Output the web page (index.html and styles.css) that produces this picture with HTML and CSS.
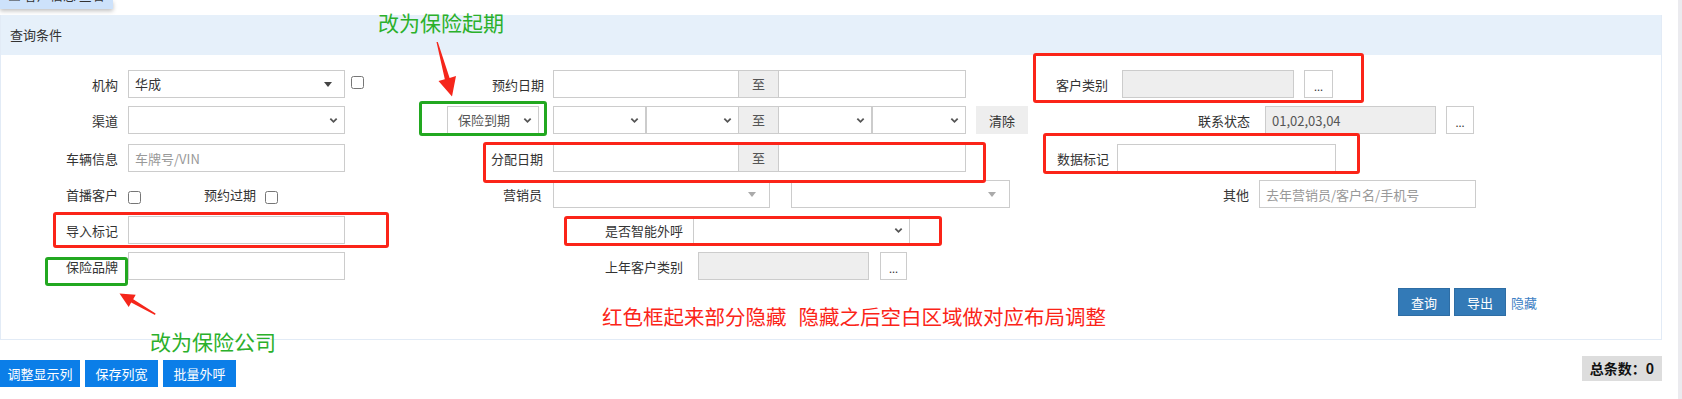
FILE: index.html
```html
<!DOCTYPE html>
<html lang="zh-CN">
<head>
    <meta charset="UTF-8">
    <meta name="viewport" content="width=device-width, initial-scale=1.0">
    <link rel="stylesheet" href="styles.css">
    <title>查询条件</title>
</head>
<body>

<div class="page">
    <div class="main">
        <div class="top-tab"><span class="tab-text">▣ 客户信息 查看</span></div>

        <div class="panel">
            <div class="panel-heading">查询条件</div>
            <div class="panel-body">

                <div class="form-row">
                    <label class="lbl lbl-first">机构</label>
                    <div class="sel w217"><span class="val">华成</span><i class="tri"></i></div>
                    <input type="checkbox" class="chk chk-mid">
                    <label class="lbl lbl-yyrq">预约日期</label>
                    <div class="range">
                        <input class="ipt w186"><span class="addon">至</span><input class="ipt w188">
                    </div>
                    <label class="lbl lbl-khlb">客户类别</label>
                    <input class="ipt ro w172" readonly>
                    <button class="dots">...</button>
                </div>

                <div class="form-row row-2">
                    <label class="lbl lbl-first">渠道</label>
                    <div class="sel w217"><span class="val"></span><svg class="chev" viewBox="0 0 10 7"><path d="M1.5 1.5 5 5 8.5 1.5"/></svg></div>
                    <div class="lbl-sel">
                        <div class="sel w92"><span class="val muted">保险到期</span><svg class="chev" viewBox="0 0 10 7"><path d="M1.5 1.5 5 5 8.5 1.5"/></svg></div>
                    </div>
                    <div class="range">
                        <div class="sel w93"><svg class="chev" viewBox="0 0 10 7"><path d="M1.5 1.5 5 5 8.5 1.5"/></svg></div>
                        <div class="sel w93"><svg class="chev" viewBox="0 0 10 7"><path d="M1.5 1.5 5 5 8.5 1.5"/></svg></div>
                        <span class="addon">至</span>
                        <div class="sel w94"><svg class="chev" viewBox="0 0 10 7"><path d="M1.5 1.5 5 5 8.5 1.5"/></svg></div>
                        <div class="sel w94"><svg class="chev" viewBox="0 0 10 7"><path d="M1.5 1.5 5 5 8.5 1.5"/></svg></div>
                    </div>
                    <button class="btn-clear">清除</button>
                    <label class="lbl lbl-lxzt">联系状态</label>
                    <input class="ipt ro w171" value="01,02,03,04" readonly>
                    <button class="dots w28">...</button>
                </div>

                <div class="form-row">
                    <label class="lbl lbl-first">车辆信息</label>
                    <input class="ipt w217" placeholder="车牌号/VIN">
                    <label class="lbl lbl-fprq">分配日期</label>
                    <div class="range">
                        <input class="ipt w186"><span class="addon">至</span><input class="ipt w188">
                    </div>
                    <label class="lbl lbl-sjbj">数据标记</label>
                    <input class="ipt w219">
                </div>

                <div class="form-row">
                    <label class="lbl lbl-first">首播客户</label>
                    <input type="checkbox" class="chk chk-low">
                    <label class="lbl lbl-yygq">预约过期</label>
                    <input type="checkbox" class="chk chk-low">
                    <label class="lbl lbl-yxy">营销员</label>
                    <div class="sel light w217"><i class="tri"></i></div>
                    <div class="sel light w219 ml21"><i class="tri"></i></div>
                    <label class="lbl lbl-qt">其他</label>
                    <input class="ipt w217" placeholder="去年营销员/客户名/手机号">
                </div>

                <div class="form-row">
                    <label class="lbl lbl-first">导入标记</label>
                    <input class="ipt w217">
                    <label class="lbl lbl-znwh">是否智能外呼</label>
                    <div class="sel w217"><svg class="chev" viewBox="0 0 10 7"><path d="M1.5 1.5 5 5 8.5 1.5"/></svg></div>
                </div>

                <div class="form-row">
                    <label class="lbl lbl-first">保险品牌</label>
                    <input class="ipt w217">
                    <label class="lbl lbl-snkh">上年客户类别</label>
                    <input class="ipt ro w171" readonly>
                    <button class="dots w27 ml11">...</button>
                </div>

                <div class="actions">
                    <button class="btn-primary">查询</button>
                    <button class="btn-primary">导出</button>
                    <a class="link" href="#">隐藏</a>
                </div>

            </div>
        </div>

        <div class="toolbar">
            <button class="btn-blue w80">调整显示列</button>
            <button class="btn-blue w73">保存列宽</button>
            <button class="btn-blue w73">批量外呼</button>
            <div class="total">总条数：0</div>
        </div>

        <!-- review notes drawn over the form -->
        <div class="note-box red box-khlb"></div>
        <div class="note-box red box-sjbj"></div>
        <div class="note-box red box-fprq"></div>
        <div class="note-box red box-znwh"></div>
        <div class="note-box red box-drbj"></div>
        <div class="note-box green box-bxdq"></div>
        <div class="note-box green box-bxpp"></div>

        <div class="note-text green-text note-qq">改为保险起期</div>
        <div class="note-text green-text note-gs">改为保险公司</div>
        <div class="note-text red-text note-hide">红色框起来部分隐藏<span class="gap">隐藏之后空白区域做对应布局调整</span></div>

        <svg class="note-arrows" width="1678" height="399">
            <polygon points="436.5,42 444.8,79.3 438.5,81 452,96.5 456,76 449.6,77.9 437.8,42" fill="#f5261b"/>
            <polygon points="155,315 131.2,302.6 128.7,307 119.5,293.5 135.7,294.8 133.2,299.2 155.6,313.6" fill="#f5261b"/>
        </svg>
    </div>
    <div class="scroll-track"></div>
</div>

</body>
</html>
```

FILE: styles.css
```css
body {
    margin: 0;
    font-family: "Noto Sans CJK SC", "Microsoft YaHei", sans-serif;
    font-size: 13px;
    color: #333;
    background: #fff;
}

.page {
    display: flex;
    height: 399px;
    overflow: hidden;
}

.main {
    position: relative;
    width: 1678px;
}

.scroll-track {
    width: 4px;
    background: #ebebef;
}

.top-tab {
    width: 113px;
    height: 9px;
    overflow: hidden;
    background: #cde2fb;
    box-shadow: 0 2px 4px rgba(0, 0, 0, 0.25);
}

.tab-text {
    display: block;
    margin-top: -15px;
    padding-left: 8px;
    line-height: 20px;
    color: #333;
}

.panel {
    margin-top: 6px;
    width: 1662px;
    box-sizing: border-box;
    border: 1px solid #e2ebf6;
    border-top: none;
}

.panel-heading {
    height: 40px;
    line-height: 40px;
    padding-left: 9px;
    background: #e6f0fa;
}

.panel-body {
    padding: 15px 0 23px 0;
}

.form-row {
    display: flex;
    align-items: center;
    height: 28px;
    margin-bottom: 8px;
}

.form-row.row-2 {
    margin-bottom: 10px;
}

.lbl {
    flex: none;
    align-self: flex-start;
    box-sizing: border-box;
    text-align: right;
    padding-top: 5px;
    padding-right: 10px;
    line-height: 20px;
    white-space: nowrap;
}

.lbl-first { width: 127px; }
.lbl-yyrq { width: 189px; padding-right: 9px; }
.lbl-khlb { width: 156px; padding-right: 14px; }
.lbl-lxzt { width: 237px; padding-right: 15px; }
.lbl-fprq { width: 208px; }
.lbl-sjbj { width: 151px; padding-right: 8px; }
.lbl-yygq { width: 124px; padding-right: 9px; }
.lbl-yxy { width: 275px; padding-right: 11px; }
.lbl-qt { width: 249px; }
.lbl-znwh { width: 348px; }
.lbl-snkh { width: 353px; padding-right: 15px; }

.lbl-sel {
    width: 208px;
    box-sizing: border-box;
    display: flex;
    justify-content: flex-end;
    padding-right: 14px;
}

.ipt {
    flex: none;
    height: 28px;
    box-sizing: border-box;
    border: 1px solid #ccc;
    padding: 0 6px;
    font-family: inherit;
    font-size: 13px;
    color: #555;
    background: #fff;
    outline: none;
}

.ipt::placeholder {
    color: #999;
}

.ipt.ro {
    background: #eee;
}

.sel {
    flex: none;
    position: relative;
    height: 28px;
    box-sizing: border-box;
    border: 1px solid #ccc;
    background: #fff;
    padding-left: 6px;
    line-height: 26px;
    display: flex;
    align-items: center;
}

.sel .val {
    flex: 1;
    color: #333;
}

.sel .val.muted {
    color: #555;
    padding-left: 4px;
}

.chev {
    position: absolute;
    right: 6px;
    top: 10px;
    width: 9px;
    height: 7px;
    fill: none;
    stroke: #555;
    stroke-width: 2;
}

.tri {
    position: absolute;
    right: 12px;
    top: 11px;
    width: 0;
    height: 0;
    border-left: 4px solid transparent;
    border-right: 4px solid transparent;
    border-top: 5px solid #444;
}

.sel.light .tri {
    border-top-color: #aaa;
    right: 13px;
}

.range {
    display: flex;
    flex: none;
}

.addon {
    width: 39px;
    height: 28px;
    box-sizing: border-box;
    line-height: 26px;
    text-align: center;
    background: #eee;
    border-top: 1px solid #ccc;
    border-bottom: 1px solid #ccc;
    color: #555;
}

.chk {
    flex: none;
    width: 13px;
    height: 13px;
    margin: 0;
}

.chk-mid {
    margin-left: 6px;
    align-self: flex-start;
    margin-top: 6px;
}

.chk-low {
    align-self: flex-start;
    margin-top: 11px;
}

.dots {
    flex: none;
    width: 29px;
    height: 28px;
    margin-left: 10px;
    padding: 0;
    border: 1px solid #ccc;
    background: #fff;
    color: #333;
    font-size: 11px;
    line-height: 30px;
    font-family: inherit;
}

.btn-clear {
    flex: none;
    width: 52px;
    height: 28px;
    margin-left: 10px;
    border: none;
    background: #eee;
    color: #333;
    font-family: inherit;
    font-size: 13px;
    padding: 0;
}

.w27 { width: 27px; }
.w28 { width: 28px; }
.w73 { width: 73px; }
.w80 { width: 80px; }
.w92 { width: 92px; }
.w93 { width: 93px; }
.w94 { width: 94px; }
.w171 { width: 171px; }
.w172 { width: 172px; }
.w186 { width: 186px; }
.w188 { width: 188px; }
.w217 { width: 217px; }
.w219 { width: 219px; }
.ml11 { margin-left: 11px; }
.ml21 { margin-left: 21px; }

.actions {
    display: flex;
    align-items: center;
    justify-content: flex-end;
    padding-right: 124px;
    height: 28px;
}

.btn-primary {
    width: 52px;
    height: 28px;
    margin-left: 4px;
    padding: 0;
    border: 1px solid #2e6da4;
    background: #337ab7;
    color: #fff;
    font-family: inherit;
    font-size: 13px;
}

.link {
    margin-left: 5px;
    color: #3c80c4;
    text-decoration: none;
}

.toolbar {
    display: flex;
    align-items: flex-start;
    width: 1662px;
    padding-top: 16px;
}

.btn-blue {
    height: 27px;
    margin-top: 4px;
    margin-right: 5px;
    padding: 0;
    border: none;
    background: #0b7ee8;
    color: #fff;
    font-family: inherit;
    font-size: 13px;
}

.total {
    margin-left: auto;
    width: 80px;
    height: 25px;
    line-height: 25px;
    text-align: center;
    background: #ddd;
    color: #111;
    font-weight: bold;
    font-size: 14px;
}

/* review annotations */
.note-box {
    position: absolute;
    box-sizing: border-box;
    border: 3px solid;
    border-radius: 3px;
}

.note-box.red { border-color: #fb2418; }
.note-box.green { border-color: #22a820; }

.box-khlb { left: 1033px; top: 53px; width: 331px; height: 50px; }
.box-sjbj { left: 1043px; top: 133px; width: 317px; height: 41px; }
.box-fprq { left: 483px; top: 142px; width: 503px; height: 41px; }
.box-znwh { left: 564px; top: 216px; width: 378px; height: 30px; }
.box-drbj { left: 53px; top: 212px; width: 336px; height: 36px; }
.box-bxdq { left: 419px; top: 101px; width: 128px; height: 35px; }
.box-bxpp { left: 45px; top: 257px; width: 83px; height: 29px; }

.note-text {
    position: absolute;
    font-size: 21px;
    line-height: 21px;
    white-space: nowrap;
}

.green-text { color: #2bb02b; }
.red-text { color: #fb2418; }

.note-qq { left: 378px; top: 12px; }
.note-gs { left: 150px; top: 331px; }
.note-hide { left: 602px; top: 306px; font-size: 20.5px; }

.note-hide .gap {
    margin-left: 12px;
}

.note-arrows {
    position: absolute;
    left: 0;
    top: 0;
    pointer-events: none;
}
```
